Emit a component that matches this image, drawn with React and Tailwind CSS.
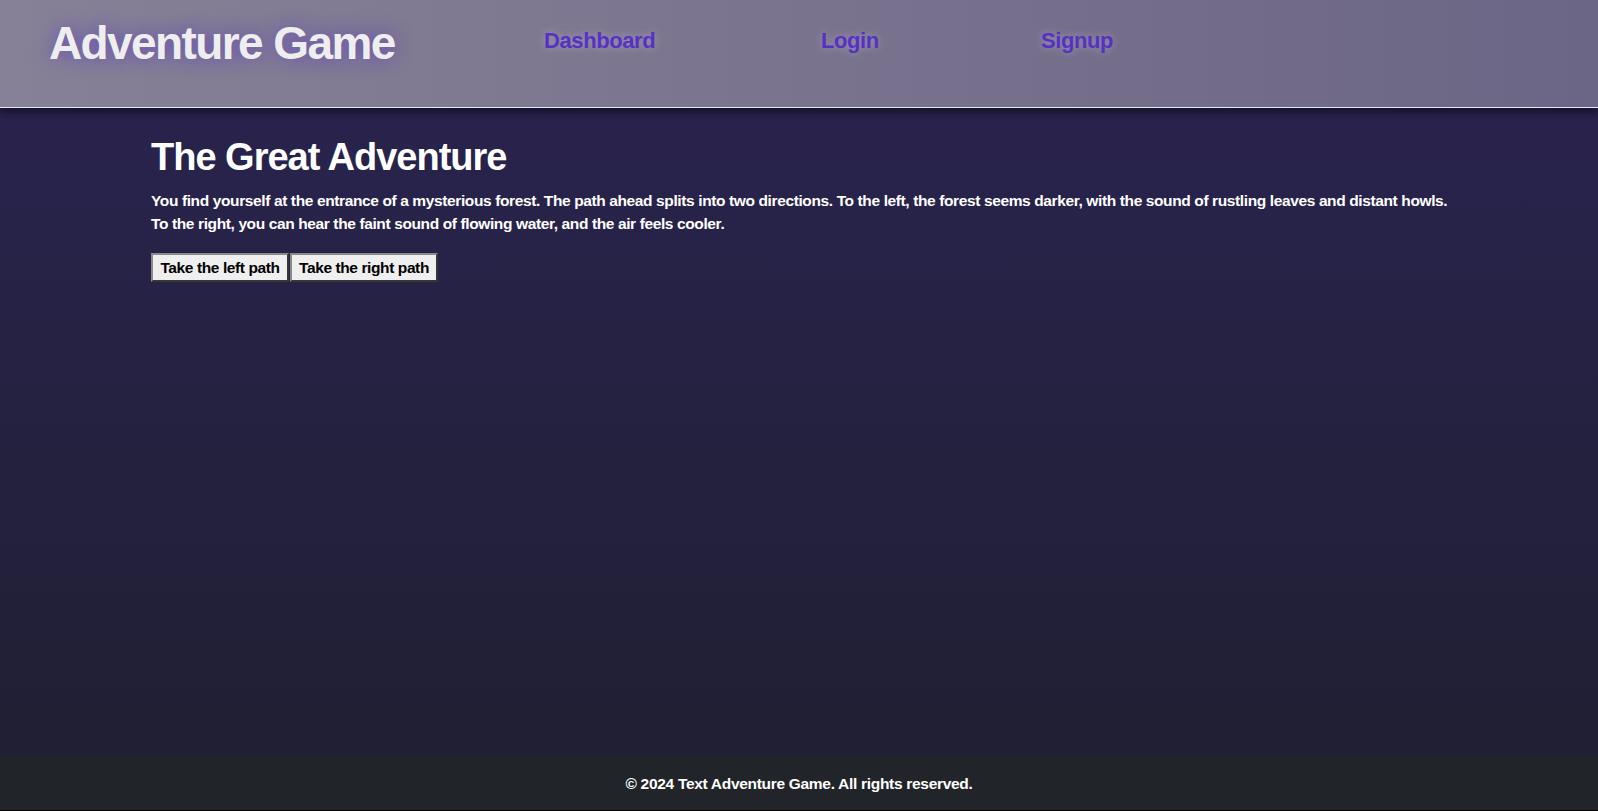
import React from 'react';

const FONT = "font-['Liberation_Sans',Arial,sans-serif]";

const NAV_LINKS = [
  { label: 'Dashboard', cls: 'w-[277px]' },
  { label: 'Login', cls: 'w-[220px]' },
  { label: 'Signup', cls: 'w-[100px]' }
];

export default function App() {
  return (
    <div className={`min-h-screen flex flex-col ${FONT}`}>
      {/* Header */}
      <header className="relative z-10 h-[108px] flex items-start bg-gradient-to-r from-[#878197] to-[#6c6686] border-b border-[#e8e6f0] shadow-[0_4px_8px_rgba(10,8,25,0.7)]">
        <div className="w-[544px] shrink-0 pl-[49px] pt-[15px]">
          <h1 className="text-[46px] leading-[56px] font-bold tracking-[-1.6px] text-[#eeeeee] [text-shadow:0_0_18px_rgba(100,70,190,0.9)] whitespace-nowrap">
            Adventure Game
          </h1>
        </div>
        <nav className="flex pt-[27px]">
          {NAV_LINKS.map((link) => (
            <div key={link.label} className={link.cls}>
              <a
                href="#"
                className="text-[22px] leading-[28px] font-bold tracking-[-0.4px] text-[#5731c3] [text-shadow:0_0_8px_rgba(255,255,255,0.3)]"
              >
                {link.label}
              </a>
            </div>
          ))}
        </nav>
      </header>

      {/* Main */}
      <main className="flex-1 bg-gradient-to-b from-[#29234d] to-[#201f33] px-[151px] pt-[27px]">
        <h2 className="text-[38px] leading-[44px] font-bold tracking-[-1px] text-white">The Great Adventure</h2>
        <p className="mt-[10px] text-[15.5px] leading-[23px] font-bold tracking-[-0.38px] text-white whitespace-nowrap">
          You find yourself at the entrance of a mysterious forest. The path ahead splits into two directions. To the left, the forest seems darker, with the sound of rustling leaves and distant howls.
          <br />
          To the right, you can hear the faint sound of flowing water, and the air feels cooler.
        </p>
        <div className="flex mt-[18px]">
          <button className="w-[138px] h-[29px] bg-[#efefef] text-black text-[15.5px] font-bold tracking-[-0.4px] border-2 border-[#8a8a8a] [border-style:outset]">
            Take the left path
          </button>
          <button className="ml-px w-[148px] h-[29px] bg-[#efefef] text-black text-[15.5px] font-bold tracking-[-0.4px] border-2 border-[#8a8a8a] [border-style:outset]">
            Take the right path
          </button>
        </div>
      </main>

      {/* Footer */}
      <footer className="h-[56px] bg-[#212428] border-b border-black flex items-center justify-center">
        <p className="pt-[2px] text-[15.5px] font-bold tracking-[-0.3px] text-white">© 2024 Text Adventure Game. All rights reserved.</p>
      </footer>
    </div>
  );
}
